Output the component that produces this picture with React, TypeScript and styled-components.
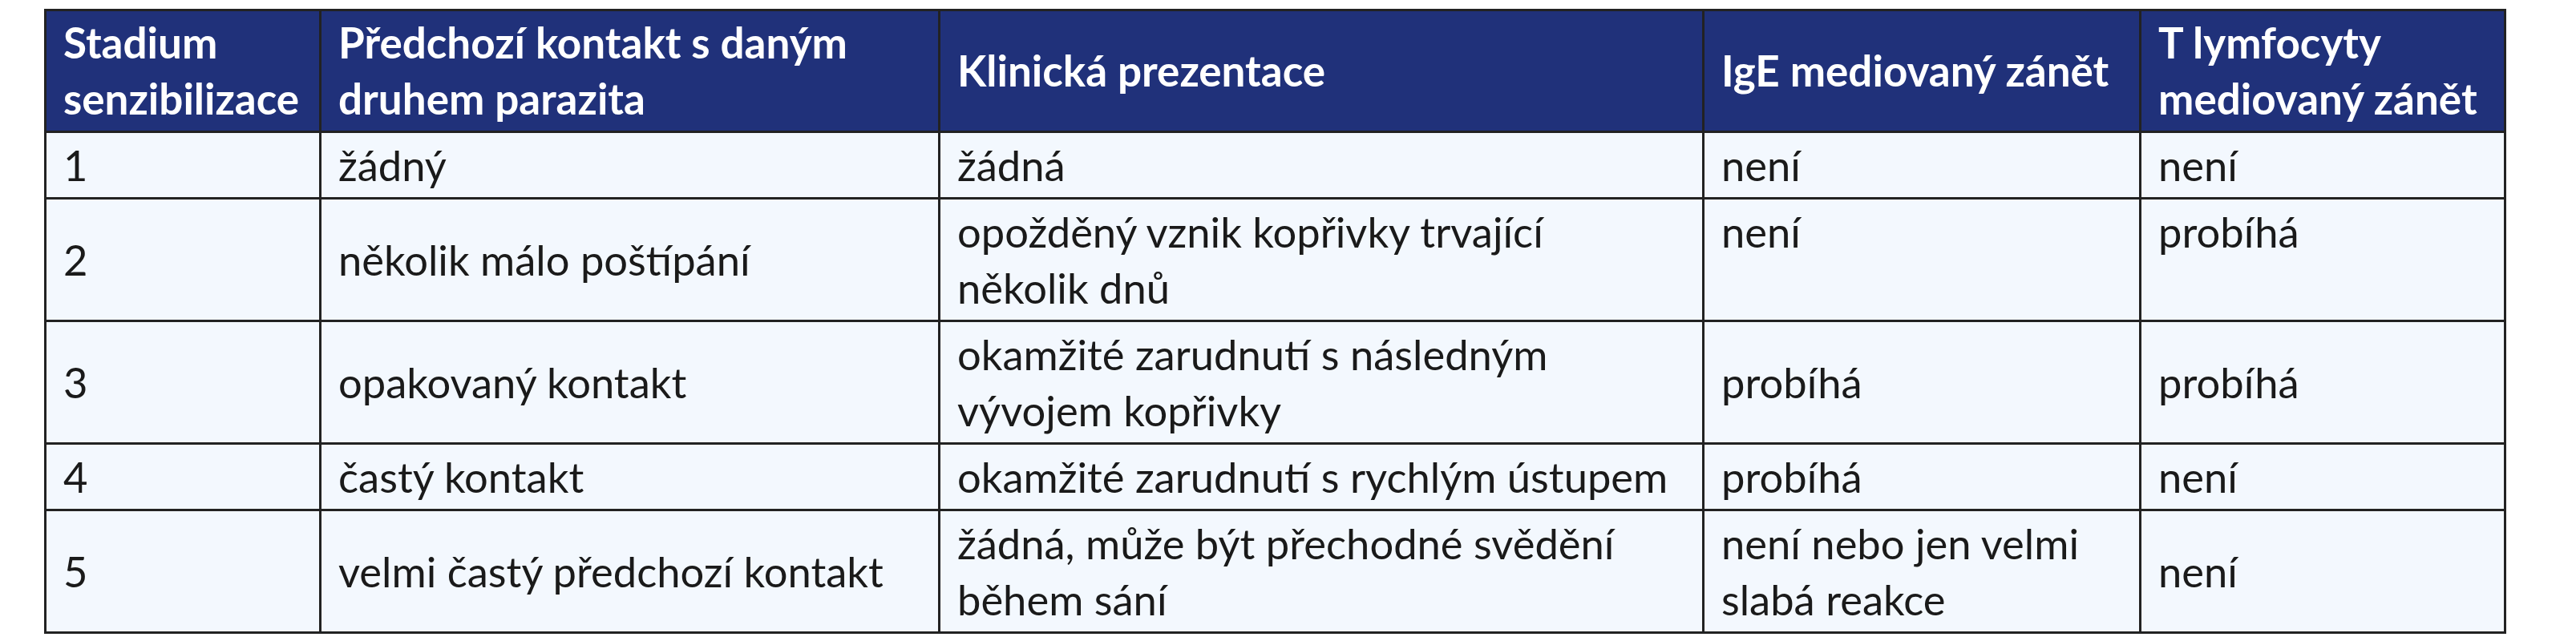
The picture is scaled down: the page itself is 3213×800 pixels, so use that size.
import React from 'react';
import styled, { createGlobalStyle } from 'styled-components';

type Cell = { lines: string[]; top?: boolean };

const widths = [343, 772, 953, 545, 455];

const hlavicka: string[][] = [
  ['Stadium', 'senzibilizace'],
  ['Předchozí kontakt s daným', 'druhem parazita'],
  ['Klinická prezentace'],
  ['IgE mediovaný zánět'],
  ['T lymfocyty', 'mediovaný zánět'],
];

const radky: Cell[][] = [
  [
    { lines: ['1'] },
    { lines: ['žádný'] },
    { lines: ['žádná'] },
    { lines: ['není'] },
    { lines: ['není'] },
  ],
  [
    { lines: ['2'] },
    { lines: ['několik málo poštípání'] },
    { lines: ['opožděný vznik kopřivky trvající', 'několik dnů'] },
    { lines: ['není'], top: true },
    { lines: ['probíhá'], top: true },
  ],
  [
    { lines: ['3'] },
    { lines: ['opakovaný kontakt'] },
    { lines: ['okamžité zarudnutí s následným', 'vývojem kopřivky'] },
    { lines: ['probíhá'] },
    { lines: ['probíhá'] },
  ],
  [
    { lines: ['4'] },
    { lines: ['častý kontakt'] },
    { lines: ['okamžité zarudnutí s rychlým ústupem'] },
    { lines: ['probíhá'] },
    { lines: ['není'] },
  ],
  [
    { lines: ['5'] },
    { lines: ['velmi častý předchozí kontakt'] },
    { lines: ['žádná, může být přechodné svědění', 'během sání'] },
    { lines: ['není nebo jen velmi', 'slabá reakce'] },
    { lines: ['není'] },
  ],
];

const renderLines = (lines: string[]) =>
  lines.map((l, i) => (
    <React.Fragment key={i}>
      {i > 0 && <br />}
      {l}
    </React.Fragment>
  ));

const App: React.FC = () => {
  return (
    <>
      <GlobalStyle />
      <Stranka>
        <Tabulka>
          <colgroup>
            {widths.map((w, i) => (
              <Sloupec key={i} $w={w} />
            ))}
          </colgroup>
          <thead>
            <tr>
              {hlavicka.map((h, i) => (
                <HlavniBunka key={i}>{renderLines(h)}</HlavniBunka>
              ))}
            </tr>
          </thead>
          <tbody>
            {radky.map((r, i) => (
              <tr key={i}>
                {r.map((c, j) => (
                  <Bunka key={j} $top={c.top}>
                    {renderLines(c.lines)}
                  </Bunka>
                ))}
              </tr>
            ))}
          </tbody>
        </Tabulka>
      </Stranka>
    </>
  );
};

export default App;

// Styly

const GlobalStyle = createGlobalStyle`
  body {
    margin: 0;
    background: #ffffff;
    font-family: Lato, "Liberation Sans", sans-serif;
  }
`;

const Stranka = styled.div`
  padding: 11px 0 0 55px;
`;

const Tabulka = styled.table`
  border-collapse: collapse;
  table-layout: fixed;
  width: 3068px;
  border: 3px solid #222222;
`;

const Sloupec = styled.col<{ $w: number }>`
  width: ${(p) => p.$w}px;
`;

const HlavniBunka = styled.th`
  background-color: #20317a;
  color: #ffffff;
  font-weight: bold;
  font-size: 53px;
  line-height: 70px;
  text-align: left;
  vertical-align: middle;
  padding: 4px 18px 5px 21px;
  border: 3px solid #222222;
  white-space: nowrap;
`;

const Bunka = styled.td<{ $top?: boolean }>`
  background-color: #f3f8fe;
  color: #1a1a1a;
  font-size: 52.5px;
  line-height: 70px;
  text-align: left;
  vertical-align: ${(p) => (p.$top ? 'top' : 'middle')};
  padding: 5px 18px 5px 21px;
  border: 3px solid #222222;
  white-space: nowrap;
`;
